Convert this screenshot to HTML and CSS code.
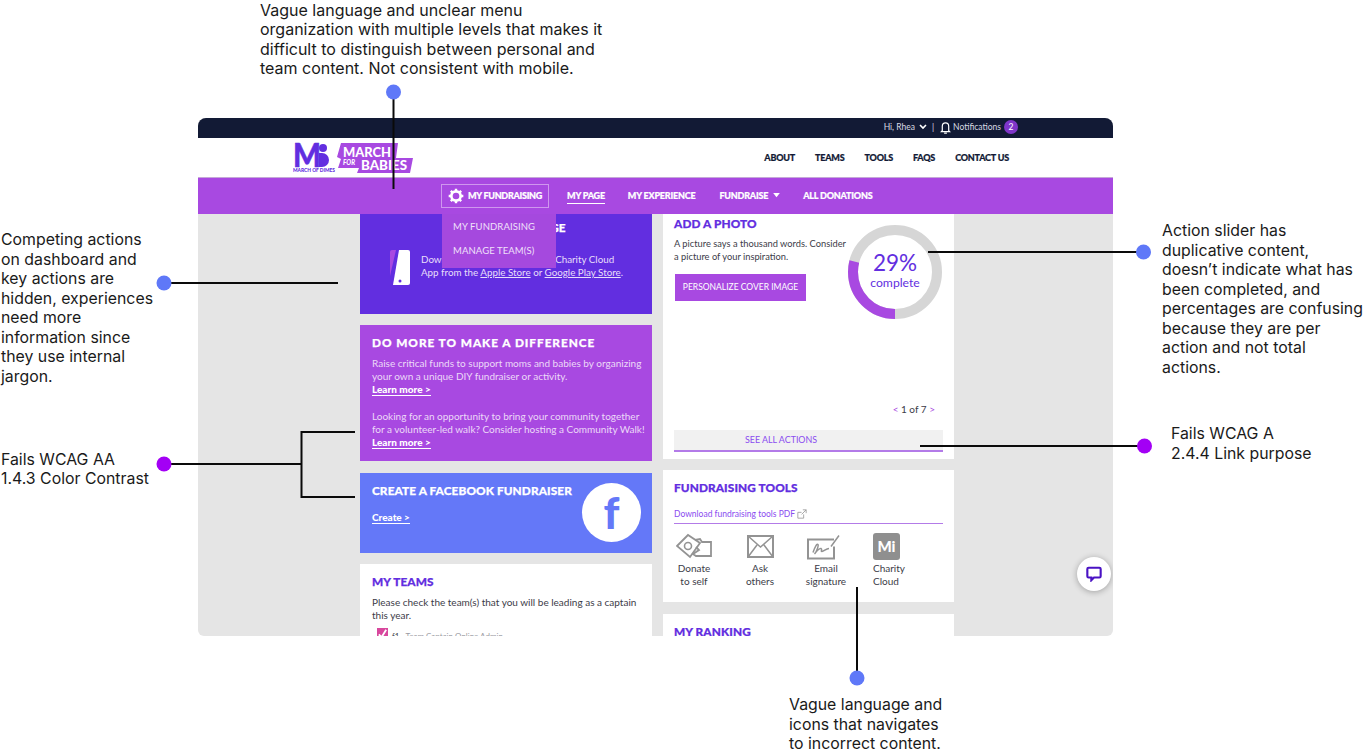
FILE: index.html
```html
<!DOCTYPE html>
<html lang="en">
<head>
<meta charset="utf-8">
<title>March for Babies dashboard review</title>
<link rel="stylesheet" href="styles.css">
</head>
<body>
<main class="stage">
  <div class="app">
    <div class="topbar">
      <span>Hi, Rhea</span>
      <svg class="chev" viewBox="0 0 8 6" width="8" height="6"><path d="M1 1l3 3 3-3" fill="none" stroke="#fff" stroke-width="1.6"/></svg>
      <span class="sep">|</span>
      <svg class="bell" viewBox="0 0 12 14" width="11" height="13"><path d="M2.500 10.500V5.500a3.500 3.500 0 0 1 7 0v5l1 1h-9z" fill="none" stroke="#fff" stroke-width="1.300"/><path d="M4.500 13.200h3" stroke="#fff" stroke-width="1.400"/></svg>
      <span>Notifications</span>
      <span class="badge">2</span>
    </div>
    <header class="header">
      <div class="logo">
        <svg viewBox="0 0 122 33" width="122" height="33">
          <text x="0" y="26" class="logo-m" textLength="28" lengthAdjust="spacingAndGlyphs">M</text>
          <circle cx="30" cy="7" r="4" fill="#622ee0"/>
          <path d="M26 12h3a7 7 0 0 1 0 14h-3z" fill="#622ee0"/>
          <text x="0" y="31" class="logo-small" textLength="42" lengthAdjust="spacingAndGlyphs">MARCH OF DIMES</text>
          <path d="M48 2H105L103 17H120L117 32H64L66 27H45L48 18L44 16z" fill="#a849e1"/>
          <text x="50" y="16" class="logo-word" textLength="48" lengthAdjust="spacingAndGlyphs">MARCH</text>
          <text x="50" y="24" class="logo-for" textLength="12" lengthAdjust="spacingAndGlyphs">FOR</text>
          <text x="68" y="29" class="logo-word" textLength="46" lengthAdjust="spacingAndGlyphs">BABIES</text>
        </svg>
      </div>
      <nav class="mainnav">
        <a>ABOUT</a><a>TEAMS</a><a>TOOLS</a><a>FAQS</a><a>CONTACT US</a>
      </nav>
    </header>
    <nav class="subnav">
      <a class="sub-box">
        <svg viewBox="0 0 24 24" width="16" height="16"><circle cx="12" cy="12" r="7" fill="none" stroke="#fff" stroke-width="4"/><path d="M12 1v4M12 19v4M1 12h4M19 12h4M4.200 4.200l2.800 2.800M17 17l2.800 2.800M4.200 19.800L7 17M17 7l2.800-2.800" stroke="#fff" stroke-width="3.600"/></svg>
        MY FUNDRAISING
      </a>
      <a class="sub-current">MY PAGE</a>
      <a>MY EXPERIENCE</a>
      <a class="sub-caret">FUNDRAISE <svg viewBox="0 0 8 6" width="7" height="5"><path d="M0 0h8L4 5z" fill="#fff"/></svg></a>
      <a>ALL DONATIONS</a>
    </nav>
    <div class="content">
      <div class="col col-left">
        <section class="card card-violet">
          <h2 class="title-light title-center">FUNDRAISING PAGE</h2>
          <div class="app-row">
            <svg class="phone" viewBox="0 0 22 37" width="22" height="37"><path d="M7 1L1 27V3a2 2 0 0 1 2-2z" fill="#a849e1"/><path d="M10 1h9a2 2 0 0 1 2 2v31a2 2 0 0 1-2 2H4z" fill="#fff"/><circle cx="11" cy="32" r="1.500" fill="#622ee0"/></svg>
            <p>Download the March of Dimes Charity Cloud<br>App from the <u>Apple Store</u> or <u>Google Play Store</u>.</p>
          </div>
        </section>
        <section class="card card-purple">
          <h2 class="title-light title-wide">DO MORE TO MAKE A DIFFERENCE</h2>
          <p>Raise critical funds to support moms and babies by organizing<br>your own a unique DIY fundraiser or activity.<br><a class="more">Learn more &gt;</a></p>
          <p class="para-gap">Looking for an opportunity to bring your community together<br>for a volunteer-led walk? Consider hosting a Community Walk!<br><a class="more">Learn more &gt;</a></p>
        </section>
        <section class="card card-blue">
          <div>
            <h2 class="title-light">CREATE A FACEBOOK FUNDRAISER</h2>
            <a class="more create">Create &gt;</a>
          </div>
          <span class="fb">f</span>
        </section>
        <section class="card card-white teams">
          <h2 class="title">MY TEAMS</h2>
          <p>Please check the team(s) that you will be leading as a captain<br>this year.</p>
          <div class="team-row">
            <span class="check"><svg viewBox="0 0 12 12" width="11" height="11"><path d="M2 7l3 3 5-8" fill="none" stroke="#fff" stroke-width="2"/></svg></span>
            <span class="team-id">f1</span><span class="team-name">Team Captain Online Admin</span>
          </div>
        </section>
      </div>
      <div class="col col-right">
        <section class="card card-white actions">
          <div class="action-main">
            <div class="action-text">
              <h2 class="title">ADD A PHOTO</h2>
              <p>A picture says a thousand words. Consider<br>a picture of your inspiration.</p>
              <a class="btn">PERSONALIZE COVER IMAGE</a>
            </div>
            <div class="ring">
              <svg viewBox="0 0 94 94" width="94" height="94">
                <circle cx="47" cy="47" r="42" fill="none" stroke="#d6d6d6" stroke-width="10"/>
                <circle cx="47" cy="47" r="42" fill="none" stroke="#a849e1" stroke-width="10" stroke-dasharray="76.500 270" transform="rotate(90 47 47)"/>
              </svg>
              <div class="ring-label"><strong>29%</strong><span>complete</span></div>
            </div>
          </div>
          <div class="pager"><b>&lt;</b> 1 of 7 <b>&gt;</b></div>
          <a class="see-all">SEE ALL ACTIONS</a>
        </section>
        <section class="card card-white tools">
          <h2 class="title">FUNDRAISING TOOLS</h2>
          <a class="pdf">Download fundraising tools PDF
            <svg viewBox="0 0 12 12" width="10" height="10"><path d="M8 6.500V11H1V4h4.500M7 1h4v4M11 1L5.500 6.500" fill="none" stroke="#999" stroke-width="1"/></svg>
          </a>
          <div class="tool-row">
            <div class="tool tool-a">
              <svg viewBox="0 0 37 27" width="37" height="27"><path d="M1 13L12 2l12 8-10 14z" fill="none" stroke="#939393" stroke-width="1.800"/><circle cx="12" cy="13" r="3.500" fill="none" stroke="#939393" stroke-width="1.600"/><path d="M19 7l5-1 2 3h9v14H20l-3-2 6-4-3-3" fill="none" stroke="#939393" stroke-width="1.800"/></svg>
              <span>Donate<br>to self</span>
            </div>
            <div class="tool tool-b">
              <svg viewBox="0 0 27 23" width="27" height="23"><rect x="1" y="1" width="25" height="21" fill="none" stroke="#939393" stroke-width="2"/><path d="M1 1l12.500 11L26 1M1 22l9-12M26 22l-9-12" fill="none" stroke="#939393" stroke-width="1.500"/></svg>
              <span>Ask<br>others</span>
            </div>
            <div class="tool tool-c">
              <svg viewBox="0 0 34 26" width="34" height="26"><path d="M27 6H1v19h26V13" fill="none" stroke="#939393" stroke-width="2"/><path d="M6 19c2-6 4-9 5-8s-2 8-3 9 4-6 6-5-1 3 1 3 4-3 7-3M24 13L32 2" fill="none" stroke="#939393" stroke-width="1.500"/></svg>
              <span>Email<br>signature</span>
            </div>
            <div class="tool tool-d">
              <div class="cloud-icon">Mi</div>
              <span>Charity<br>Cloud</span>
            </div>
          </div>
        </section>
        <section class="card card-white ranking">
          <h2 class="title">MY RANKING</h2>
        </section>
      </div>
    </div>
    <div class="dropdown">
      <a>MY FUNDRAISING</a>
      <a>MANAGE TEAM(S)</a>
    </div>
    <div class="chat">
      <svg viewBox="0 0 18 18" width="16" height="16"><path d="M3 2h12a1.500 1.500 0 0 1 1.500 1.500v8A1.500 1.500 0 0 1 15 13H9l-3 3v-3H3a1.500 1.500 0 0 1-1.500-1.500v-8A1.500 1.500 0 0 1 3 2z" fill="none" stroke="#4a12c4" stroke-width="2.400"/></svg>
    </div>
  </div>

  <svg class="lines" viewBox="0 0 1366 754" width="1366" height="754">
    <g fill="none" stroke="#0a0a0a" stroke-width="2">
      <path d="M393.500 92V189"/>
      <path d="M164 283H338"/>
      <path d="M164 464H301M355 432H301.500V497H355"/>
      <path d="M928 252H1143"/>
      <path d="M920 446H1144"/>
      <path d="M857 587V678"/>
    </g>
    <circle cx="393.500" cy="92" r="7.500" fill="#5f78f8"/>
    <circle cx="164" cy="283" r="7.500" fill="#5f78f8"/>
    <circle cx="164" cy="464" r="7.500" fill="#a300f5"/>
    <circle cx="1143.500" cy="252" r="7.500" fill="#5f78f8"/>
    <circle cx="1144.500" cy="446" r="7.500" fill="#a300f5"/>
    <circle cx="857" cy="678" r="7.500" fill="#5f78f8"/>
  </svg>

  <p class="note note-top">Vague language and unclear menu organization with multiple levels that makes it difficult to distinguish between personal and team content. Not consistent with mobile.</p>
  <p class="note note-left">Competing actions on dashboard and key actions are hidden, experiences need more information since they use internal jargon.</p>
  <p class="note note-contrast">Fails WCAG AA<br>1.4.3 Color Contrast</p>
  <p class="note note-slider">Action slider has duplicative content, doesn’t indicate what has been completed, and percentages are confusing because they are per action and not total actions.</p>
  <p class="note note-link">Fails WCAG A<br>2.4.4 Link purpose</p>
  <p class="note note-bottom">Vague language and icons that navigates to incorrect content.</p>
</main>
</body>
</html>
```

FILE: styles.css
```css
* { box-sizing: border-box; }
html, body { margin: 0; padding: 0; background: #fff; }
body { font-family: "Lato", "Liberation Sans", sans-serif; }
p, h2 { margin: 0; }

.stage {
  position: relative;
  width: 1366px;
  height: 754px;
  overflow: hidden;
  padding: 118px 253px 0 198px;
}

/* browser window */
.app {
  position: relative;
  height: 518px;
  overflow: hidden;
  border-radius: 8px 8px 6px 6px;
  background: #e5e5e5;
  display: flex;
  flex-direction: column;
}

.topbar {
  height: 20px;
  flex: none;
  background: #121a35;
  color: #d9dbe3;
  font-size: 8.500px;
  display: flex;
  align-items: center;
  justify-content: flex-end;
  padding: 0 95px 2px 0;
}
.topbar .chev { margin: 0 5px 0 4px; }
.topbar .sep { margin-right: 6px; }
.topbar .bell { margin-right: 2px; }
.badge {
  width: 14px;
  height: 14px;
  margin-left: 3px;
  border-radius: 50%;
  background: #7f35c8;
  color: #fff;
  display: flex;
  align-items: center;
  justify-content: center;
}

.header {
  height: 39px;
  flex: none;
  background: #fff;
  display: flex;
  align-items: center;
  justify-content: space-between;
  padding: 0 104px 0 95px;
}
.logo { display: flex; }
.logo svg { display: block; }
.logo-m { font: 900 33px "Lato", sans-serif; fill: #622ee0; stroke: #622ee0; stroke-width: .5px; }
.logo-small { font: 900 5.500px "Lato", sans-serif; fill: #622ee0; }
.logo-word { font: 900 14px "Lato", sans-serif; fill: #fff; }
.logo-for { font: italic 900 7px "Lato", sans-serif; fill: #fff; }
.mainnav { display: flex; gap: 20px; }
.mainnav a {
  font-size: 9px;
  font-weight: 900;
  letter-spacing: -.2px;
  color: #121a35;
  -webkit-text-stroke: .2px #121a35;
}

.subnav {
  height: 37px;
  flex: none;
  background: #a849e1;
  display: flex;
  align-items: center;
  gap: 23px;
  padding: 0 0 1px 243px;
  border-top: 1px solid #c5a8d8;
}
.subnav a {
  font-size: 9px;
  font-weight: 900;
  letter-spacing: -.2px;
  color: #fff;
  -webkit-text-stroke: .2px #fff;
  display: flex;
  align-items: center;
  gap: 5px;
}
.subnav .sub-box {
  height: 24px;
  padding: 0 6px;
  border: 1px solid #cf97ee;
  gap: 4px;
  letter-spacing: -.28px;
  margin-right: -5px;
}
.subnav .sub-current {
  border-bottom: 1px solid #fff;
  padding: 3px 0 2px;
}
.subnav .sub-caret { margin-left: 1px; }

.content {
  flex: 1;
  min-height: 0;
  display: flex;
  gap: 11px;
  padding-left: 162px;
  overflow: hidden;
}
.col {
  width: 292px;
  flex: none;
  display: flex;
  flex-direction: column;
  gap: 11px;
}
.card {
  flex: none;
  padding: 11px 11px 0 12px;
  font-size: 10px;
  line-height: 13px;
  white-space: nowrap;
}
.card-white { background: #fff; color: #3c3c48; }
.card-violet { background: #622ee0; color: #e8defa; height: 100px; padding-top: 7px; }
.card-purple { background: #a849e1; color: #ecd9f8; height: 136px; }
.card-blue {
  background: #6478f8;
  color: #fff;
  height: 80px;
  margin-top: 1px;
  display: flex;
  justify-content: space-between;
}
.title-light, .title {
  font-size: 11.800px;
  font-weight: 900;
  line-height: 14px;
  letter-spacing: .1px;
}
.title-light { color: #fff; -webkit-text-stroke: .25px #fff; }
.title { color: #622ee0; -webkit-text-stroke: .25px #622ee0; }
.title-center { text-align: center; padding-left: 3px; }
.title-wide { letter-spacing: .95px; }

.app-row {
  display: flex;
  align-items: center;
  gap: 10px;
  margin: 14px 0 0 17px;
  font-size: 9.800px;
}
.app-row p { position: relative; top: -2px; }
.card-purple p { margin-top: 7px; }
.card-purple .para-gap { margin-top: 14px; }
.more {
  color: #fff;
  font-weight: 900;
  border-bottom: 1px solid #fff;
}
.create { display: inline-block; margin-top: 14px; line-height: 11px; }
.fb {
  width: 59px;
  height: 59px;
  margin-top: -1px;
  border-radius: 50%;
  background: #fff;
  color: #6478f8;
  font-size: 44px;
  font-weight: 900;
  line-height: 59px;
  text-align: center;
}

.teams { height: 80px; }
.teams p { margin-top: 7px; }
.team-row {
  display: flex;
  gap: 4px;
  align-items: flex-start;
  margin: 6px 0 0 5px;
  font-size: 8px;
  line-height: 12px;
}
.check { width: 11px; height: 11px; background: #d8479d; display: flex; }
.team-id { margin-top: 2px; }
.team-name { color: #9a9aa2; margin: 2px 0 0 2px; }

.col-right { width: 291px; }
.col-right .card { padding-left: 11px; }
.actions {
  height: 245px;
  padding-top: 3px;
  display: flex;
  flex-direction: column;
}
.action-main { display: flex; justify-content: space-between; height: 106px; }
.action-text p { margin-top: 6px; font-size: 9.300px; }
.btn {
  display: flex;
  width: 131px;
  height: 27px;
  margin: 11px 0 0 1px;
  align-items: center;
  justify-content: center;
  background: #a849e1;
  color: #fff;
  font-size: 8.500px;
}
.ring {
  position: relative;
  width: 94px;
  height: 94px;
  margin: 8px 1px 0 0;
}
.ring svg { display: block; }
.ring-label {
  position: absolute;
  inset: 0;
  padding-bottom: 4px;
  display: flex;
  flex-direction: column;
  align-items: center;
  justify-content: center;
  color: #622ee0;
}
.ring-label strong { font-weight: 400; font-size: 22.500px; line-height: 24px; }
.ring-label span { font-size: 12.200px; line-height: 15px; }
.pager {
  margin: 80px 8px 0 0;
  align-self: flex-end;
  font-size: 10px;
  line-height: 13px;
}
.pager b { color: #a849e1; font-weight: 400; }
.see-all {
  margin-top: 14px;
  width: 269px;
  height: 22px;
  background: #f1f1f1;
  border-bottom: 2px solid #b37be8;
  color: #8a4cf0;
  font-size: 8.900px;
  line-height: 19px;
  padding-left: 71px;
}

.tools { height: 132px; }
.pdf {
  display: block;
  width: 269px;
  margin-top: 13px;
  padding-bottom: 2px;
  color: #8a4cf0;
  font-size: 8.500px;
  border-bottom: 1px solid #b37be8;
}
.pdf svg { vertical-align: -2px; }
.tool-row { display: flex; margin-top: 9px; color: #3c3c48; }
.tool {
  display: flex;
  flex-direction: column;
  align-items: center;
  font-size: 10px;
  text-align: center;
}
.tool svg { height: 27px; margin-bottom: 2px; }
.tool-a { width: 40px; }
.tool-b { width: 36px; margin-left: 28px; }
.tool-c { width: 44px; margin-left: 26px; }
.tool-c svg { margin-right: 4px; }
.tool-d { width: 32px; margin-left: 25px; align-items: flex-start; text-align: left; }
.cloud-icon {
  width: 27px;
  height: 27px;
  margin-bottom: 2px;
  background: #8f8f8f;
  border-radius: 3px;
  color: #fff;
  font-size: 15px;
  font-weight: 900;
  line-height: 26px;
  text-align: center;
}
.ranking { height: 60px; margin-top: 1px; }

.dropdown {
  position: absolute;
  left: 244px;
  top: 96px;
  width: 114px;
  height: 54px;
  background: #a549de;
  color: #f0e0fa;
  font-size: 9.500px;
  display: flex;
  flex-direction: column;
  padding: 5px 0 0 11px;
  gap: 9px;
  line-height: 15px;
  letter-spacing: .1px;
}
.chat {
  position: absolute;
  left: 879px;
  top: 439px;
  width: 34px;
  height: 34px;
  border-radius: 50%;
  background: #fff;
  box-shadow: 0 1px 6px rgba(0, 0, 0, .3);
  display: flex;
  align-items: center;
  justify-content: center;
}

/* callouts on the canvas */
.lines { position: absolute; left: 0; top: 0; pointer-events: none; }
.note {
  position: absolute;
  font-family: "Inter", sans-serif;
  font-size: 15.850px;
  line-height: 19.500px;
  color: #1a1a1a;
}
.note-top { left: 260px; top: .5px; width: 350px; font-size: 16px; }
.note-left { left: 1px; top: 230px; width: 155px; }
.note-contrast { left: 1px; top: 449.500px; }
.note-slider { left: 1162px; top: 221px; width: 204px; }
.note-link { left: 1171px; top: 424px; }
.note-bottom { left: 789px; top: 695px; width: 160px; }
```
